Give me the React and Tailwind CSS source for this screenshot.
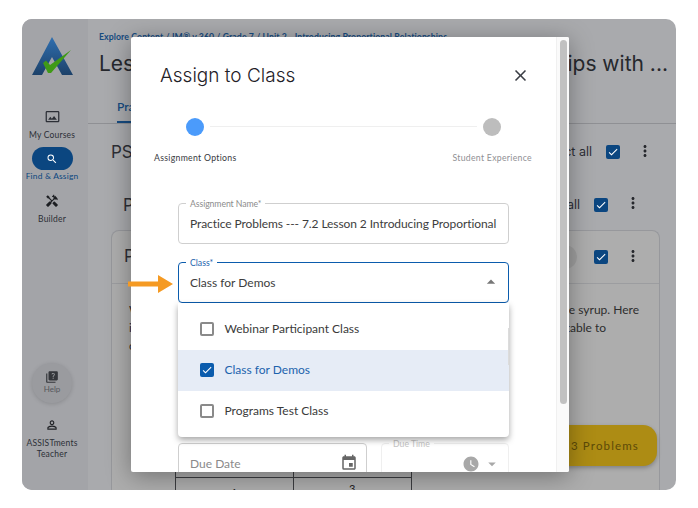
import React from "react";
import { MdSearch, MdHandyman, MdQuiz, MdPersonOutline, MdEvent, MdWatchLater, MdClose, MdMoreVert, MdCheck, MdArrowDropUp, MdArrowDropDown, MdOutlinePhotoSizeSelectActual } from "react-icons/md";

const lato = { fontFamily: "Lato, 'Open Sans', sans-serif" };
const head = { fontFamily: "Inter, 'Open Sans', sans-serif" };

function Box({ on, dark }) {
  if (on) {
    return (
      <span className={`flex h-[14px] w-[14px] shrink-0 items-center justify-center rounded-[2px] ${dark ? "bg-[#0b4680]" : "bg-[#0b5cad]"}`}>
        <MdCheck className="text-white" size={12} />
      </span>
    );
  }
  return <span className="h-[14px] w-[14px] shrink-0 rounded-[2px] border-2 border-[#8a8a8a] bg-white" />;
}

function Logo() {
  return (
    <svg width="44" height="42" viewBox="0 0 44 42" className="block">
      <defs>
        <linearGradient id="lg" x1="0" y1="0" x2="0" y2="1">
          <stop offset="0" stopColor="#2f6fb0" />
          <stop offset="1" stopColor="#1c4169" />
        </linearGradient>
      </defs>
      <path d="M22 0 L43 38 L32 38 L22 20 L12 38 L2 38 Z" fill="url(#lg)" />
      <path d="M13 26 L16 23.5 L20 28 L41 13 L21 36 L18 36 Z" fill="#3f9a16" />
    </svg>
  );
}

function NavItem({ icon, label, className = "", gap = "mt-[3px]" }) {
  return (
    <div className={`flex flex-col items-center text-[8.5px] leading-[11px] text-[#2c2f36] tracking-[0.2px] ${className}`}>
      {icon}
      <span className={gap}>{label}</span>
    </div>
  );
}

function Legend({ children, color }) {
  return (
    <span className={`absolute -top-[6px] left-[7px] bg-white px-[4px] text-[8.7px] leading-[11px] ${color}`}>{children}</span>
  );
}

function Option({ label, selected }) {
  return (
    <div className={`flex h-[41px] items-center gap-[11px] pl-[22px] text-[12px] ${selected ? "bg-[#e6ecf6] text-[#1c63ad]" : "text-[#3a3a3a]"}`}>
      <Box on={selected} />
      <span>{label}</span>
    </div>
  );
}

function RowEnd({ label, pr }) {
  return (
    <div className={`ml-auto flex items-center gap-[14px] ${pr}`}>
      <span className="text-[12.5px] text-[#2d2f35]">{label}</span>
      <Box on dark />
    </div>
  );
}

export default function App() {
  return (
    <div className="h-[508px] w-[698px] overflow-hidden bg-white pl-[22px] pt-[19px]" style={lato}>
      <div className="relative flex h-[471px] w-[654px] overflow-hidden rounded-[10px] bg-[#a9aaad]">
        {/* Sidebar */}
        <aside className="flex w-[66px] shrink-0 flex-col items-center bg-[#a3a4a8] pr-[6px] pt-[18px]">
          <Logo />
          <NavItem className="mt-[30px]" gap="mt-[6px]" icon={<MdOutlinePhotoSizeSelectActual size={15} className="text-[#2c2f36]" />} label="My Courses" />
          <div className="mt-[6px] flex h-[23px] w-[41px] items-center justify-center rounded-full bg-[#0b4680]">
            <MdSearch size={12} className="text-white" />
          </div>
          <span className="mt-[1px] text-[8.4px] leading-[11px] tracking-[0.2px] text-[#0b4680]">Find &amp; Assign</span>
          <NavItem className="mt-[12px]" gap="mt-[6px]" icon={<MdHandyman size={14} className="text-[#1c1e22]" />} label="Builder" />
          <div className="mt-auto flex h-[40px] w-[40px] flex-col items-center justify-center rounded-full bg-[#9a9b9f] pb-[3px] shadow-[0_1px_4px_rgba(0,0,0,0.15)]">
            <MdQuiz size={14} className="text-[#34363b]" />
            <span className="mt-[1px] text-[8px] leading-[9px] text-[#55575c]">Help</span>
          </div>
          <MdPersonOutline size={14} className="mt-[15px] text-[#202226]" />
          <div className="mb-[30px] mt-[6px] text-center text-[8.5px] leading-[11px] tracking-[0.2px] text-[#2c2f36]">
            ASSISTments<br />Teacher
          </div>
        </aside>

        {/* Main page, dimmed */}
        <main className="relative flex min-w-0 flex-1 flex-col overflow-hidden">
          <div className="pl-[11px] pt-[13px] text-[8.7px] font-bold leading-[10px] tracking-[0.1px] text-[#164b80] whitespace-nowrap">
            Explore Content / IM® v.360 / Grade 7 / Unit 2 - Introducing Proportional Relationships
          </div>
          <div className="flex whitespace-nowrap pl-[11px] pr-[8px] pt-[8px] text-[21px] leading-[28px] text-[#26282d]" style={head}>
            <span>Les</span>
            <span className="ml-auto">ips with ...</span>
          </div>
          <div className="flex h-[46px] items-end border-b border-[#8f9094] pl-[29px]">
            <span className="w-[36px] border-b-2 border-[#164b80] pb-[7px] text-[12px] font-semibold leading-[14px] text-[#164b80]">Pra</span>
          </div>
          <div className="flex items-center pl-[23px] pt-[16px] text-[17px] leading-[24px] text-[#2d2f35]" style={head}>
            <span>PS</span>
            <RowEnd label="ct all" pr="pr-[56px]" />
            <MdMoreVert size={18} className="absolute right-[22px] top-[123px] text-[#26282d]" />
          </div>
          <div className="flex items-center pl-[35px] pt-[29px] text-[17px] leading-[24px] text-[#2d2f35]" style={head}>
            <span>P</span>
            <RowEnd label="all" pr="pr-[68px]" />
            <MdMoreVert size={18} className="absolute right-[34px] top-[175px] text-[#26282d]" />
          </div>
          {/* Card */}
          <div className="relative ml-[23px] mr-[16px] mt-[13px] flex-1 rounded-t-[8px] border border-b-0 border-[#97989c] bg-[#adadad]">
            <div className="flex h-[53px] items-center border-b border-[#9c9da0] pl-[12px] pr-[51px] text-[17px] text-[#2d2f35]" style={head}>
              <span>P</span>
              <span className="ml-auto mr-[17px] h-[24px] w-[24px] rounded-full bg-[#a0a0a0]" />
              <Box on dark />
            </div>
            <MdMoreVert size={18} className="absolute right-[17px] top-[16px] text-[#26282d]" />
            <div className="pl-[17px] pr-[20px] pt-[17px] text-[12px] leading-[18px] text-[#2e2e2e]">
              <div className="flex justify-between"><span>W</span><span>te syrup. Here</span></div>
              <div className="flex justify-between"><span>i</span><span className="mr-[33px]">table to</span></div>
              <div>c</div>
            </div>
            <div className="absolute left-[440px] top-[194px] flex h-[41px] w-[105px] items-center justify-end rounded-r-[14px] bg-[#ad8c14] pr-[18px] text-[11.5px] tracking-[1.15px] text-[#5c4a08] shadow-[0_2px_4px_rgba(0,0,0,0.25)]">
              3 Problems
            </div>
            {/* Table peeking out below the dialog */}
            <div className="absolute left-[63px] top-[234px] grid w-[237px] grid-cols-2 border-x border-t border-[#3c3d40] text-center text-[11px] leading-[14px] text-[#222]">
              <div className="h-[12px] border-b border-r border-[#3c3d40]" />
              <div className="h-[12px] border-b border-[#3c3d40]" />
              <div className="h-[20px] border-r border-[#3c3d40] pt-[8px]">1</div>
              <div className="pt-[4px]">3</div>
            </div>
          </div>
        </main>

        {/* Dialog */}
        <div className="absolute left-[109px] top-[18px] flex h-[435px] w-[438px] overflow-hidden rounded-[2px] bg-white shadow-[0_4px_24px_rgba(0,0,0,0.35)]">
          <div className="min-w-0 flex-1">
            <div className="flex items-center justify-between pl-[29px] pr-[26px] pt-[27px]">
              <h2 className="text-[19px] font-light leading-[24px] text-[#1f2127]" style={head}>Assign to Class</h2>
              <MdClose size={19} className="-translate-y-px text-[#3a3d44]" />
            </div>
            {/* Stepper */}
            <div className="mt-[30px] flex items-center pl-[55px] pr-[55px]">
              <span className="h-[18px] w-[18px] shrink-0 rounded-full bg-[#4b9bfb]" />
              <span className="mx-[6px] h-px flex-1 -translate-y-px bg-[#efefef]" />
              <span className="h-[18px] w-[18px] shrink-0 rounded-full bg-[#bdbdbd]" />
            </div>
            <div className="mt-[15px] flex justify-between whitespace-nowrap pl-[23px] pr-[24px] text-[8.7px] leading-[14px] tracking-[0.3px]">
              <span className="text-[#37393e]">Assignment Options</span>
              <span className="text-[#8f9094]">Student Experience</span>
            </div>
            <div className="ml-[47px] mr-[47px] mt-[38px] flex flex-col">
              <div className="relative flex h-[41px] items-center rounded-[4px] border border-[#cfcfcf] pl-[11px] text-[12px] tracking-[-0.085px] text-[#3d3d3d] whitespace-nowrap">
                <Legend color="text-[#8c8c8c]">Assignment Name*</Legend>
                <span>Practice Problems --- 7.2 Lesson 2 Introducing Proportional</span>
              </div>
              <div className="relative mt-[18px] flex h-[41px] w-[331px] items-center rounded-[4px] border-[1.5px] border-[#0b5cad] pl-[11px] text-[12px] text-[#3d3d3d]">
                <Legend color="text-[#1c63ad]">Class*</Legend>
                <span>Class for Demos</span>
                <MdArrowDropUp size={20} className="absolute right-[7px] top-[9px] text-[#777]" />
                <div className="absolute -left-[1.5px] top-[39.5px] z-10 w-[331px] rounded-b-[4px] bg-white pb-[5px] pt-[6px] shadow-[0_3px_6px_rgba(0,0,0,0.35)]">
                  <Option label="Webinar Participant Class" />
                  <Option label="Class for Demos" selected />
                  <Option label="Programs Test Class" />
                  <span className="absolute right-0 top-[25px] h-[37px] w-px bg-[#dcdcdc]" />
                </div>
              </div>
              <div className="mt-[140px] flex gap-[14px]">
                <div className="flex h-[60px] w-[189px] items-start justify-between rounded-[4px] border border-[#cfcfcf] pl-[11px] pr-[8px] pt-[10px] text-[12px] text-[#8a8a8a]">
                  <span className="pt-[1px]">Due Date</span>
                  <MdEvent size={18} className="text-[#666]" />
                </div>
                <div className="relative flex h-[60px] w-[128px] items-start justify-end gap-[3px] rounded-[4px] border border-[#efefef] pr-[7px] pt-[12px]">
                  <Legend color="text-[#c4c4c4]">Due Time</Legend>
                  <MdWatchLater size={18} className="-mt-[1px] text-[#a8a8a8]" />
                  <MdArrowDropDown size={18} className="-mt-[1px] text-[#a8a8a8]" />
                </div>
              </div>
            </div>
          </div>
          {/* Scrollbar */}
          <div className="flex h-full w-[13px] shrink-0 justify-center border-l border-[#f0f0f0] bg-[#fafafa] pt-[3px]">
            <span className="h-[364px] w-[7px] rounded-full bg-[#c1c1c1]" />
          </div>
        </div>

        {/* Callout arrow */}
        <svg width="46" height="18" viewBox="0 0 46 18" className="absolute left-[106px] top-[256px]">
          <path d="M0 6.5 H30 V0 L45 9 L30 18 V11.5 H0 Z" fill="#f59a23" />
        </svg>
      </div>
    </div>
  );
}
